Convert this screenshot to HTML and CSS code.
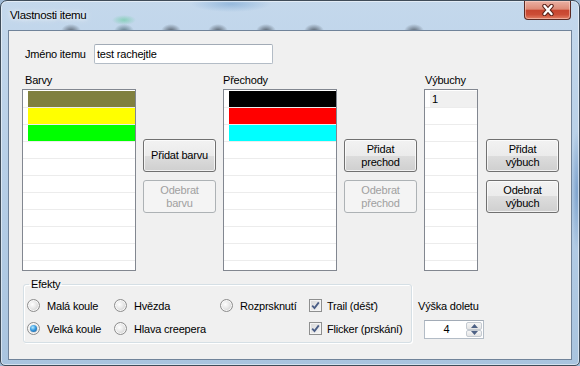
FILE: index.html
```html
<!DOCTYPE html>
<html lang="cs">
<head>
  <meta charset="UTF-8">
  <title>Vlastnosti itemu</title>
  <link rel="stylesheet" href="styles.css">
</head>
<body>

<div class="window">
  <div class="titlebar">
    <span class="title">Vlastnosti itemu</span>
    <span class="close">
      <svg width="14" height="12" viewBox="0 0 14 12">
        <path d="M3.5 2 L10.5 10 M10.5 2 L3.5 10" stroke="#5a2219" stroke-width="4.4" stroke-linecap="round"/>
        <path d="M3.5 2 L10.5 10 M10.5 2 L3.5 10" stroke="#fff" stroke-width="2.4" stroke-linecap="round"/>
      </svg>
    </span>
  </div>

  <div class="client">
    <div class="name-row">
      <span class="name-label">Jméno itemu</span>
      <div class="textbox">test rachejtle</div>
    </div>

    <div class="lists">
      <div class="col">
        <div class="col-label indent">Barvy</div>
        <div class="listbox">
          <div class="row"><span class="swatch sw-olive"></span></div>
          <div class="row"><span class="swatch sw-yellow"></span></div>
          <div class="row"><span class="swatch sw-lime"></span></div>
          <div class="row"></div><div class="row"></div><div class="row"></div>
          <div class="row"></div><div class="row"></div><div class="row"></div>
          <div class="row"></div><div class="row"></div>
        </div>
      </div>
      <div class="btns">
        <button class="btn">Přidat barvu</button>
        <button class="btn" disabled>Odebrat<br>barvu</button>
      </div>

      <div class="col">
        <div class="col-label">Přechody</div>
        <div class="listbox">
          <div class="row"><span class="swatch sw-black"></span></div>
          <div class="row"><span class="swatch sw-red"></span></div>
          <div class="row"><span class="swatch sw-cyan"></span></div>
          <div class="row"></div><div class="row"></div><div class="row"></div>
          <div class="row"></div><div class="row"></div><div class="row"></div>
          <div class="row"></div><div class="row"></div>
        </div>
      </div>
      <div class="btns">
        <button class="btn">Přidat<br>prechod</button>
        <button class="btn" disabled>Odebrat<br>přechod</button>
      </div>

      <div class="col">
        <div class="col-label indent1">Výbuchy</div>
        <div class="listbox narrow">
          <div class="row"><span class="item">1</span></div>
          <div class="row"></div><div class="row"></div><div class="row"></div>
          <div class="row"></div><div class="row"></div><div class="row"></div>
          <div class="row"></div><div class="row"></div><div class="row"></div>
          <div class="row"></div>
        </div>
      </div>
      <div class="btns last">
        <button class="btn">Přidat<br>výbuch</button>
        <button class="btn">Odebrat<br>výbuch</button>
      </div>
    </div>

    <div class="bottom">
      <fieldset class="group">
        <legend>Efekty</legend>
        <div class="opts">
          <label class="opt"><span class="radio"></span>Malá koule</label>
          <label class="opt"><span class="radio"></span>Hvězda</label>
          <label class="opt"><span class="radio"></span>Rozprsknutí</label>
          <label class="opt"><span class="check"><svg width="9" height="9" viewBox="0 0 9 9"><path d="M1.2 4.6 L3.5 7 L7.8 1.4" fill="none" stroke="#4a5d86" stroke-width="1.8"/></svg></span>Trail (déšť)</label>
          <label class="opt"><span class="radio on"></span>Velká koule</label>
          <label class="opt"><span class="radio"></span>Hlava creepera</label>
          <span></span>
          <label class="opt"><span class="check"><svg width="9" height="9" viewBox="0 0 9 9"><path d="M1.2 4.6 L3.5 7 L7.8 1.4" fill="none" stroke="#4a5d86" stroke-width="1.8"/></svg></span>Flicker (prskání)</label>
        </div>
      </fieldset>

      <div class="height">
        <div class="col-label">Výška doletu</div>
        <div class="spin">
          <span class="spin-value">4</span>
          <span class="spin-btns">
            <span class="spin-btn"><svg width="7" height="4" viewBox="0 0 7 4"><path d="M0 4 L3.5 0 L7 4 Z" fill="#4d6185"/></svg></span>
            <span class="spin-btn"><svg width="7" height="4" viewBox="0 0 7 4"><path d="M0 0 L3.5 4 L7 0 Z" fill="#4d6185"/></svg></span>
          </span>
        </div>
      </div>
    </div>
  </div>
</div>

</body>
</html>
```

FILE: styles.css
```css
* { box-sizing: border-box; }
body {
  margin: 0;
  background: #9fbad6;
  font-family: "Liberation Sans", Arial, sans-serif;
  font-size: 11px;
  letter-spacing: -0.2px;
  color: #000;
}

/* window frame (aero glass) */
.window {
  width: 580px;
  height: 366px;
  display: flex;
  flex-direction: column;
  padding: 0 7px 5px;
  border: 1px solid #3f4c59;
  border-radius: 7px 7px 5px 5px;
  box-shadow: inset 0 0 0 1px rgba(255, 255, 255, 0.5);
  background:
    radial-gradient(ellipse 10px 7px at 70px 30px, rgba(60, 68, 78, 0.75), transparent),
    radial-gradient(ellipse 12px 5px at 123px 19px, rgba(80, 200, 140, 0.5), transparent),
    radial-gradient(ellipse 10px 7px at 123px 30px, rgba(60, 90, 100, 0.7), transparent),
    radial-gradient(ellipse 10px 7px at 170px 30px, rgba(60, 68, 78, 0.8), transparent),
    radial-gradient(ellipse 10px 7px at 217px 30px, rgba(60, 68, 78, 0.8), transparent),
    radial-gradient(ellipse 10px 7px at 265px 30px, rgba(60, 68, 78, 0.8), transparent),
    radial-gradient(ellipse 10px 7px at 313px 30px, rgba(60, 68, 78, 0.8), transparent),
    radial-gradient(ellipse 10px 7px at 413px 30px, rgba(60, 68, 78, 0.75), transparent),
    radial-gradient(ellipse 40px 8px at 230px 3px, rgba(120, 165, 210, 0.6), transparent),
    radial-gradient(ellipse 6px 60px at 576px 190px, rgba(70, 120, 180, 0.5), transparent),
    linear-gradient(#c4d8ec, #b3cce5 60%, #a9c4df);
}
.titlebar {
  height: 29px;
  display: flex;
  align-items: flex-start;
}
.title {
  margin: 8px 0 0 2px;
  font-size: 11.5px;
  letter-spacing: -0.3px;
  line-height: 13px;
  text-shadow: 0 0 4px #fff, 0 0 8px rgba(255, 255, 255, 0.9);
}
.close {
  margin-left: auto;
  margin-right: 1px;
  width: 47px;
  height: 19px;
  display: flex;
  align-items: center;
  justify-content: center;
  border: 1px solid #5b2a23;
  border-top: none;
  border-radius: 0 0 4px 4px;
  background: linear-gradient(#eab1a4 0%, #de8b77 45%, #c7452f 52%, #cc4d36 75%, #e27f65 100%);
  box-shadow: inset 0 0 0 1px rgba(255, 220, 210, 0.5);
}

/* client area */
.client {
  flex: 1;
  background: #f0f0f0;
  border: 1px solid #70839a;
  padding: 13px 0 0 13px;
}
.name-row {
  display: flex;
  align-items: center;
  height: 20px;
}
.name-label {
  width: 72px;
  padding-left: 3px;
}
.textbox {
  width: 179px;
  height: 20px;
  line-height: 18px;
  padding-left: 2px;
  background: #fff;
  border: 1px solid #b3bcc6;
  border-top-color: #a2abb6;
  border-radius: 2px;
}

.lists {
  display: flex;
  gap: 7px;
  margin-top: 10px;
}
.col-label {
  line-height: 13px;
  margin-bottom: 2px;
}
.indent { padding-left: 3px; }
.indent1 { padding-left: 1px; }
.listbox {
  width: 114px;
  height: 182px;
  padding-top: 1px;
  overflow: hidden;
  background: #fff;
  border: 1px solid #828790;
}
.listbox.narrow { width: 54px; }
.row {
  height: 17px;
  padding-left: 5px;
  border-bottom: 1px solid #ececec;
}
.swatch {
  display: block;
  height: 16px;
}
.sw-olive { background: #80803f; }
.sw-yellow { background: #ffff00; }
.sw-lime { background: #00ff00; }
.sw-black { background: #000; }
.sw-red { background: #ff0000; }
.sw-cyan { background: #00ffff; }
.item {
  display: block;
  height: 16px;
  line-height: 16px;
  padding-left: 2px;
  background: #f0f0f0;
}

.btns {
  display: flex;
  flex-direction: column;
  gap: 8px;
  margin-top: 65px;
}
.btns.last { margin-left: 1px; }
.btn {
  width: 73px;
  height: 33px;
  padding: 0;
  font-family: inherit;
  font-size: 11px;
  letter-spacing: -0.2px;
  line-height: 13px;
  color: #000;
  border: 1px solid #707070;
  border-radius: 3px;
  background: linear-gradient(#f2f2f2 0%, #ebebeb 50%, #dddddd 50%, #cfcfcf 100%);
  box-shadow: inset 0 0 0 1px rgba(255, 255, 255, 0.7);
}
.btn:disabled {
  color: #a0a0a0;
  border-color: #adb2b5;
  background: #f4f4f4;
  box-shadow: none;
}

/* bottom part */
.bottom {
  display: flex;
  margin-top: 7px;
}
.group {
  width: 389px;
  margin: 0 0 0 1px;
  padding: 6px 3px 5px;
  border: 1px solid #d5dfe5;
  border-radius: 3px;
  box-shadow: inset 1px 1px 0 #fff, 1px 1px 0 #fff;
}
.group legend {
  padding: 0 2px;
  margin-left: 2px;
  line-height: 13px;
}
.opts {
  display: grid;
  grid-template-columns: 87px 106px 89px auto;
  grid-auto-rows: 17px;
  row-gap: 6px;
}
.opt {
  display: flex;
  align-items: center;
  white-space: nowrap;
}
.radio {
  position: relative;
  width: 13px;
  height: 13px;
  margin-right: 7px;
  border: 1px solid #8d8d8d;
  border-radius: 50%;
  background: radial-gradient(circle at 40% 40%, #fefefe 0, #e9e9e9 40%, #cdcdcd 80%);
  box-shadow: inset 0 0 0 1px rgba(255, 255, 255, 0.8);
}
.radio.on::after {
  content: "";
  position: absolute;
  left: 2px;
  top: 2px;
  width: 7px;
  height: 7px;
  border-radius: 50%;
  background: radial-gradient(circle at 40% 35%, #b8ecff 0, #3a9be0 45%, #0f4f8e 100%);
}
.check {
  display: flex;
  align-items: center;
  justify-content: center;
  width: 13px;
  height: 13px;
  margin-right: 5px;
  border: 1px solid #8e8f8f;
  background: linear-gradient(135deg, #d8d8d8, #f6f6f6);
  box-shadow: inset 0 0 0 1px #f4f4f4;
}

.height {
  margin-left: 6px;
  padding-top: 22px;
}
.spin {
  display: flex;
  width: 60px;
  height: 19px;
  margin: 7px 0 0 6px;
  background: #fff;
  border: 1px solid #b3bcc6;
  border-top-color: #a2abb6;
}
.spin-value {
  flex: 1;
  text-align: center;
  line-height: 17px;
  padding-left: 2px;
}
.spin-btns {
  display: flex;
  flex-direction: column;
  width: 16px;
  margin: 1px 1px 1px 0;
}
.spin-btn {
  flex: 1;
  display: flex;
  align-items: center;
  justify-content: center;
  border: 1px solid #c4cad1;
  border-radius: 2px;
  background: linear-gradient(#f6f6f6, #e4e4e4);
}
```
